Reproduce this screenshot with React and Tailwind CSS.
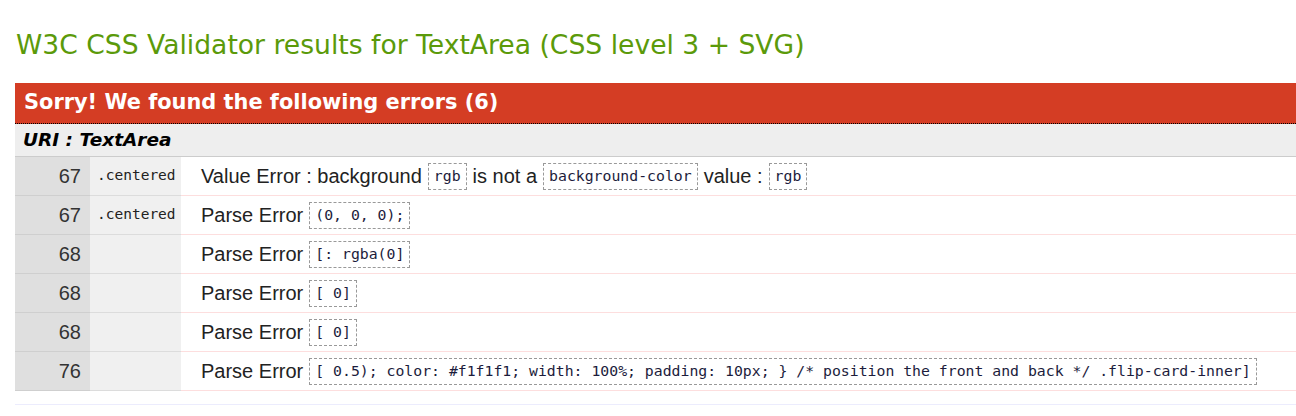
import React from "react";

const rows = [
  {
    line: "67",
    ctx: ".centered",
    parts: [
      { t: "Value Error : background" },
      { c: "rgb" },
      { t: "is not a" },
      { c: "background-color" },
      { t: "value :" },
      { c: "rgb" },
    ],
  },
  { line: "67", ctx: ".centered", parts: [{ t: "Parse Error" }, { c: "(0, 0, 0);" }] },
  { line: "68", ctx: "", parts: [{ t: "Parse Error" }, { c: "[: rgba(0]" }] },
  { line: "68", ctx: "", parts: [{ t: "Parse Error" }, { c: "[ 0]" }] },
  { line: "68", ctx: "", parts: [{ t: "Parse Error" }, { c: "[ 0]" }] },
  {
    line: "76",
    ctx: "",
    parts: [
      { t: "Parse Error" },
      {
        c: "[ 0.5); color: #f1f1f1; width: 100%; padding: 10px; } /* position the front and back */ .flip-card-inner]",
      },
    ],
  },
];

const mono = "font-['DejaVu_Sans_Mono',monospace]";

const Code = ({ children }) => (
  <span
    className={`${mono} text-[14.8px] text-[#1c1c3c] border border-dashed border-[#999] px-[5px] h-[27px] inline-flex items-center whitespace-pre`}
  >
    {children}
  </span>
);

const ErrorRow = ({ row }) => (
  <div className="grid grid-cols-[75px_91px_1fr] h-[39px]">
    <div className="bg-[#dfdfdf] border-b border-[#cfcfcf] flex items-center justify-end pr-[9px] text-[20px] text-[#333] font-['Liberation_Sans',sans-serif]">
      {row.line}
    </div>
    <div className={`bg-[#f0f0f0] border-b border-[#dcdcdc] flex items-center pl-[7px] ${mono} text-[14.5px] text-[#222]`}>
      {row.ctx}
    </div>
    <div className="border-b border-[#fddede] flex items-center gap-[6px] pl-[20px] text-[20px] text-[#222] font-['Liberation_Sans',sans-serif] whitespace-nowrap">
      {row.parts.map((p, i) =>
        p.c !== undefined ? <Code key={i}>{p.c}</Code> : <span key={i}>{p.t}</span>
      )}
    </div>
  </div>
);

export default function App() {
  return (
    <div className="w-[1296px] h-[416px] bg-white overflow-hidden pl-[15px] pt-[29px]">
      <h2 className="text-[#5b9a0a] text-[26.6px] leading-[32px] pl-[1px] font-['DejaVu_Sans',Verdana,sans-serif] h-[54px]">
        W3C CSS Validator results for TextArea (CSS level 3 + SVG)
      </h2>
      <div className="bg-[#d43d24] h-[41px] border-b border-dotted border-black flex items-center pl-[9px] text-white font-bold text-[20.9px] font-['DejaVu_Sans',Verdana,sans-serif]">
        Sorry! We found the following errors (6)
      </div>
      <div className="bg-[#eeeeee] h-[33px] border-b border-[#cccccc] flex items-center pl-[8px] font-bold italic text-[18.5px] text-black font-['DejaVu_Sans',Verdana,sans-serif]">
        URI : TextArea
      </div>
      {rows.map((r, i) => (
        <ErrorRow key={i} row={r} />
      ))}
      <div className="mt-[13px] border-t border-[#ececfd]" />
    </div>
  );
}
